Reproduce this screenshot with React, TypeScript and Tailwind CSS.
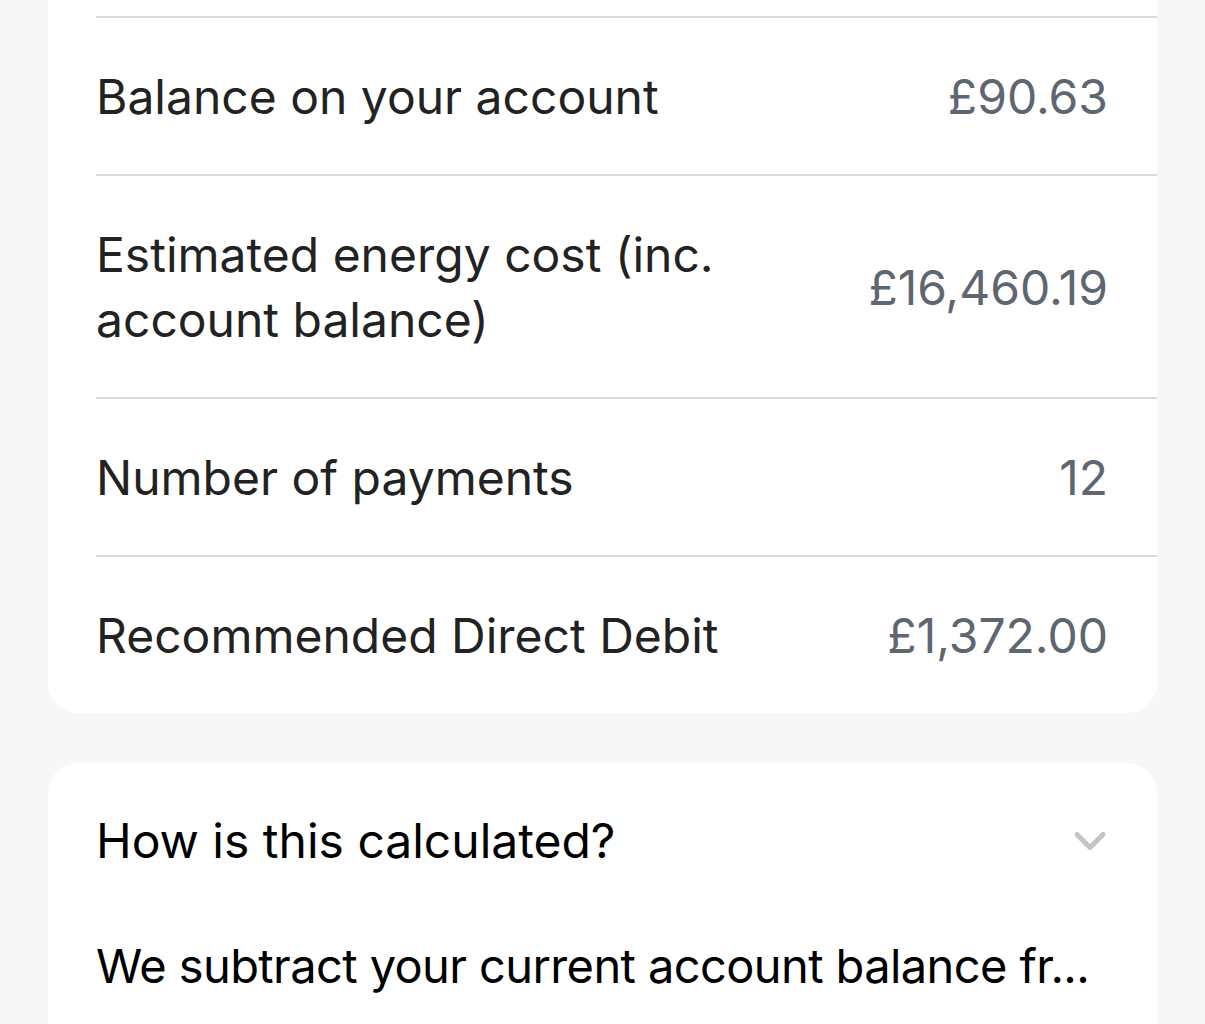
import { ChevronDown } from "lucide-react";

const rows = [
  { label: "Balance on your account", value: "£90.63" },
  { label: "Estimated energy cost (inc. account balance)", value: "£16,460.19" },
  { label: "Number of payments", value: "12" },
  { label: "Recommended Direct Debit", value: "£1,372.00" },
];

export default function App() {
  return (
    <div
      className="min-h-screen bg-[#f7f7f7] px-[48px] overflow-hidden h-[1024px]"
      style={{ fontFamily: "Inter, 'Noto Sans', sans-serif" }}
    >
      {/* Summary card */}
      <div className="bg-white rounded-b-[30px] -mt-[30px] pt-[46px]">
        {rows.map((row) => (
          <div
            key={row.label}
            className="ml-[48px] border-t-2 border-[#d9d9d9] flex items-center justify-between gap-10 pr-[49px] pt-[46px] pb-[45px]"
          >
            <div className="flex-1 max-w-[640px] text-[48px] leading-[65px] text-[#222]">
              {row.label}
            </div>
            <div className="text-[48px] leading-[65px] text-[#5f6670] whitespace-nowrap">
              {row.value}
            </div>
          </div>
        ))}
      </div>

      {/* Explanation card */}
      <div className="bg-white rounded-t-[30px] mt-[50px] px-[48px] pt-[45px] pb-10">
        <div className="flex items-center justify-between">
          <div className="text-[48px] leading-[65px] text-black">
            How is this calculated?
          </div>
          <ChevronDown className="w-[52px] h-[52px] text-[#c4c4c4] -mr-[7px]" strokeWidth={2.3} />
        </div>
        <p className="mt-[60px] text-[47px] leading-[65px] text-black tracking-[-0.6px] whitespace-nowrap">
          We subtract your current account balance fr...
        </p>
      </div>
    </div>
  );
}
